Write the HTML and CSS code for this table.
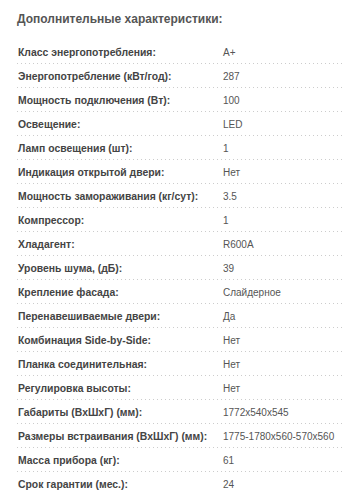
FILE: index.html
```html
<!DOCTYPE html>
<html lang="ru">
<head>
<meta charset="utf-8">
<link rel="stylesheet" href="styles.css">
</head>
<body>
<div class="specs">
  <h2 class="specs-title">Дополнительные характеристики:</h2>
  <div class="specs-list">
    <div class="row"><span class="label">Класс энергопотребления:</span><span class="value">A+</span></div>
    <div class="row"><span class="label">Энергопотребление (кВт/год):</span><span class="value">287</span></div>
    <div class="row"><span class="label">Мощность подключения (Вт):</span><span class="value">100</span></div>
    <div class="row"><span class="label">Освещение:</span><span class="value">LED</span></div>
    <div class="row"><span class="label">Ламп освещения (шт):</span><span class="value">1</span></div>
    <div class="row"><span class="label">Индикация открытой двери:</span><span class="value">Нет</span></div>
    <div class="row"><span class="label">Мощность замораживания (кг/сут):</span><span class="value">3.5</span></div>
    <div class="row"><span class="label">Компрессор:</span><span class="value">1</span></div>
    <div class="row"><span class="label">Хладагент:</span><span class="value">R600A</span></div>
    <div class="row"><span class="label">Уровень шума, (дБ):</span><span class="value">39</span></div>
    <div class="row"><span class="label">Крепление фасада:</span><span class="value">Слайдерное</span></div>
    <div class="row"><span class="label">Перенавешиваемые двери:</span><span class="value">Да</span></div>
    <div class="row"><span class="label">Комбинация Side-by-Side:</span><span class="value">Нет</span></div>
    <div class="row"><span class="label">Планка соединительная:</span><span class="value">Нет</span></div>
    <div class="row"><span class="label">Регулировка высоты:</span><span class="value">Нет</span></div>
    <div class="row"><span class="label">Габариты (ВхШхГ) (мм):</span><span class="value">1772x540x545</span></div>
    <div class="row"><span class="label">Размеры встраивания (ВхШхГ) (мм):</span><span class="value">1775-1780x560-570x560</span></div>
    <div class="row"><span class="label">Масса прибора (кг):</span><span class="value">61</span></div>
    <div class="row"><span class="label">Срок гарантии (мес.):</span><span class="value">24</span></div>
  </div>
</div>
</body>
</html>
```
FILE: styles.css
```css
html, body {
  margin: 0;
  padding: 0;
  background: #fff;
}
body {
  font-family: "Liberation Sans", Arial, sans-serif;
}
.specs {
  padding: 11px 0 0 17px;
}
.specs-title {
  margin: 0 0 13px;
  font-size: 12px;
  font-weight: bold;
  color: #555;
  line-height: 16px;
}
.specs-list {
  display: flex;
  flex-direction: column;
}
.row {
  display: grid;
  grid-template-columns: 205px 1fr;
  height: 24px;
  align-items: center;
  font-size: 10px;
  padding-left: 1px;
  background-image: linear-gradient(to right, #ccc 1px, transparent 1px);
  background-size: 4px 1px;
  background-repeat: repeat-x;
  background-position: 0 100%;
}
.row:last-child {
  background-image: none;
}
.label {
  font-size: 10.4px;
  font-weight: bold;
  color: #444;
}
.value {
  color: #555;
}
```
